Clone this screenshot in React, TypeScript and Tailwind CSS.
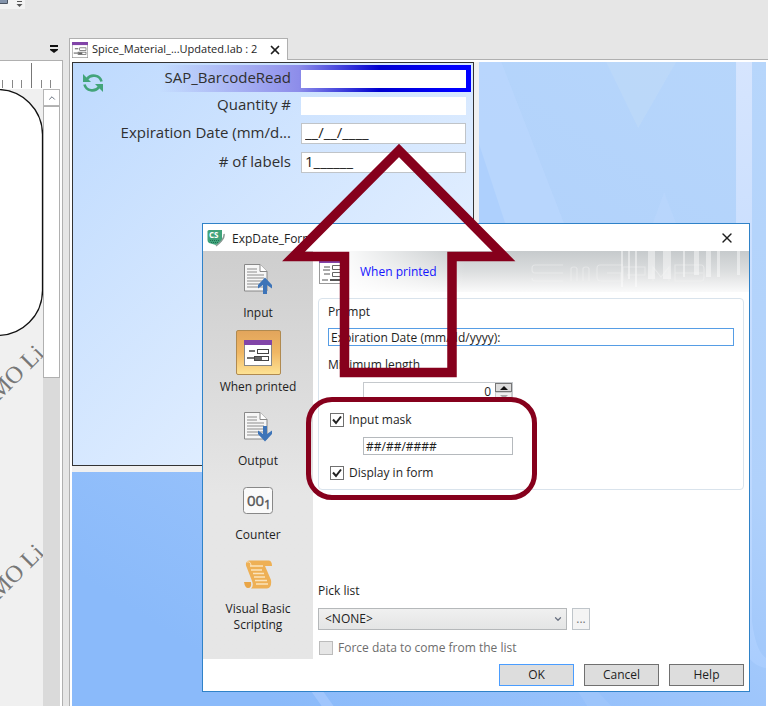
import React from "react";
import { ChevronDown, ChevronUp, X } from "lucide-react";

export default function App() {
  return (
    <div className="relative flex flex-col h-screen overflow-hidden bg-[#e6e6e6] font-['Open_Sans','Liberation_Sans',sans-serif] text-[#1e1e1e]">
      <Toolbar />
      <main className="flex flex-1 min-h-0">
        <LabelPane />
        <FormPane />
      </main>
      <FormatDialog />
      <Annotations />
    </div>
  );
}

const Toolbar = () => (
  <header className="h-[38px] shrink-0">
    <div className="flex items-start h-[9px] w-[25px] bg-[#f3f3f3]">
      <svg className="w-[25px] h-[9px]" viewBox="0 0 25 9" aria-hidden="true">
        <path d="M0 0H7V3H0Z" fill="#8494ab" />
        <path d="M0 3.500H7.500V0" fill="none" stroke="#4b5563" />
        <path d="M17 1.500H22" stroke="#555" />
        <path d="M16.500 4H22.500L19.500 7Z" fill="#555" />
      </svg>
    </div>
  </header>
);

const LabelPane = () => (
  <section className="flex flex-col w-[63px] shrink-0">
    <div className="flex items-center justify-end h-[22px] pr-1">
      <button aria-label="Open documents" className="w-[10px] h-[10px]">
        <svg viewBox="0 0 10 10" aria-hidden="true">
          <path d="M1 2H9" stroke="#111" strokeWidth="2" />
          <path d="M1 5H9V6L5 9L1 6Z" fill="#111" />
        </svg>
      </button>
    </div>
    <div className="flex flex-col flex-1 min-h-0 border-t border-r border-[#b0b0b0] bg-white pr-[2px]">
      <svg className="w-full h-[28px] shrink-0" viewBox="0 0 60 28" preserveAspectRatio="xMinYMin slice" aria-hidden="true">
        <path d="M31.500 2V27" stroke="#777" />
        <path d="M2.500 19V27M12.500 19V27M21.500 19V27M41.500 19V27M50.500 19V27" stroke="#888" />
      </svg>
      <div className="flex flex-1 min-h-0">
        <svg className="flex-1 h-full bg-[#f0f0f0]" viewBox="0 0 43 617" preserveAspectRatio="xMinYMin slice" aria-hidden="true">
          <rect x="-90" y="0.500" width="132.500" height="246" rx="45" fill="#fff" stroke="#111" strokeWidth="1.300" />
          <g fill="#777" fontFamily="'Liberation Serif', serif" fontSize="24">
            <text transform="translate(2 309) rotate(-45)" x="-5">MO Li</text>
            <text transform="translate(2 508) rotate(-45)" x="-5">MO Li</text>
          </g>
        </svg>
        <div className="flex flex-col w-[17px] bg-[#dadada]">
          <button aria-label="Scroll up" className="flex items-center justify-center h-[17px] border border-[#b5b5b5] bg-white">
            <ChevronUp className="w-[10px] h-[10px] text-gray-600" />
          </button>
          <div className="h-[272px] border border-[#b0b0b0] bg-white" />
        </div>
      </div>
    </div>
  </section>
);

const FormPane = () => (
  <section className="flex flex-col flex-1 min-w-0 pl-[6px]">
    <div className="flex shrink-0 h-[22px]">
      <div className="flex items-center gap-1 pl-[2px] pr-[5px] w-[219px] border-t border-x border-[#b0b0b0] bg-white">
        <FormIcon className="w-4 h-4 shrink-0" />
        <span className="text-[11px] whitespace-nowrap">Spice_Material_...Updated.lab : 2</span>
        <button aria-label="Close tab" className="ml-auto">
          <X className="w-[14px] h-[14px]" strokeWidth={3} />
        </button>
      </div>
      <div className="flex-1 border-b border-[#b0b0b0]" />
    </div>
    <div className="flex flex-1 min-h-0 border-l border-[#b0b0b0] bg-white pt-[2px] pl-[2px] pr-[2px]">
      <div className="relative flex-1">
        <Wallpaper />
        <div className="relative w-[407px] max-w-full bg-[#f0f0f0] pr-[5px] pb-[6px]">
          <PrintForm />
        </div>
      </div>
    </div>
  </section>
);

const Wallpaper = () => (
  <svg className="absolute inset-0 w-full h-full" viewBox="0 0 695 644" preserveAspectRatio="none" aria-hidden="true">
    <defs>
      <linearGradient id="sky" x1="1" y1="0" x2="0.300" y2="1">
        <stop offset="0" stopColor="#b7d6fb" />
        <stop offset="0.450" stopColor="#b0d1fb" />
        <stop offset="0.750" stopColor="#98c2fb" />
        <stop offset="1" stopColor="#8abafa" />
      </linearGradient>
      <linearGradient id="strip" x1="0" y1="0" x2="0" y2="1">
        <stop offset="0" stopColor="#d6e5fe" />
        <stop offset="0.800" stopColor="#b9d6fe" />
        <stop offset="1" stopColor="#a9cdfe" />
      </linearGradient>
    </defs>
    <rect width="695" height="644" fill="url(#sky)" />
    <path d="M407 0H430L500 180H407Z" fill="#bad7fd" opacity="0.700" />
    <path d="M407 80L440 180H407Z" fill="#aed0fd" />
    <path d="M535 0H605L567 66Z" fill="#bfdaf9" opacity="0.600" />
    <path d="M593 130L612 180H575Z" fill="#bad7fd" opacity="0.600" />
    <path d="M665 0H681V560Q685 590 695 596V606Q678 604 670 580L665 540Z" fill="url(#strip)" />
    <path d="M507 630H527L540 644H516Z" fill="#a8cbfd" opacity="0.400" />
    <path d="M240 630H252L262 644H250Z" fill="#a8cbfd" opacity="0.700" />
  </svg>
);

const fields = [
  {
    id: "barcode",
    label: "SAP_BarcodeRead",
    value: "",
    row: "h-[27px] bg-[linear-gradient(90deg,transparent_15%,#8d8dea_53%,#0000d0_75%,#0000ff_95%)]",
    box: "h-[18px]",
  },
  { id: "quantity", label: "Quantity #", value: "", row: "h-[27px]", box: "h-[18px]" },
  { id: "expiration", label: "Expiration Date (mm/d...", value: "__/__/____", row: "h-[29px]", box: "h-[21px] border border-[#c0c4c8]" },
  { id: "labels", label: "# of labels", value: "1______", row: "h-[29px]", box: "h-[21px] border border-[#c0c4c8]" },
];

const PrintForm = () => (
  <form className="flex items-start h-[404px] border border-[#333] bg-linear-to-br from-[#bedafe] to-[#eff6ff] pt-[2px] pr-[2px]">
    <button type="button" aria-label="Refresh" className="mt-[7px] ml-[9px] shrink-0">
      <svg className="w-[22px] h-[22px]" viewBox="0 0 22 22" aria-hidden="true">
        <path d="M5 7A8 7.500 0 0 1 19.500 9.500M17 15A8 7.500 0 0 1 2.500 12.500" fill="none" stroke="#43a47a" strokeWidth="2.600" />
        <path d="M1 2V10H9Z" fill="#43a47a" />
        <path d="M21 12V20L13 12Z" fill="#43a47a" />
      </svg>
    </button>
    <div className="flex-1 min-w-0">
      {fields.map((f) => (
        <div key={f.id} className={`flex items-center pr-[5px] ${f.row}`}>
          <label htmlFor={f.id} className="flex-1 pr-[10px] pb-[2px] text-right text-[15px] whitespace-nowrap text-[#303030]">
            {f.label}
          </label>
          <input id={f.id} defaultValue={f.value} className={`w-[165px] px-[3px] pb-[2px] bg-white text-[15px] outline-none ${f.box}`} />
        </div>
      ))}
    </div>
  </form>
);

const FormIcon = ({ className }: { className: string }) => (
  <svg className={className} viewBox="0 0 28 26" preserveAspectRatio="none" aria-hidden="true">
    <rect x="0.500" y="0.500" width="27" height="25" fill="#fff" stroke="#888" />
    <rect width="28" height="5" fill="#8144a8" />
    <path d="M5 11H11M3 18H10" stroke="#444" strokeWidth="1.500" />
    <rect x="13.500" y="9.500" width="11" height="4" fill="#fff" stroke="#444" />
    <rect x="10.500" y="16.500" width="14" height="4" fill="#fff" stroke="#444" />
    <rect x="11" y="17" width="7" height="3" fill="#666" />
  </svg>
);

const BannerIcon = () => (
  <svg className="relative w-[28px] h-[24px] ml-[6px]" viewBox="0 0 28 24" aria-hidden="true">
    <rect x="0.500" y="0.500" width="27" height="23" fill="#fff" stroke="#999" />
    <rect width="28" height="3" fill="#8144a8" />
    <path d="M5 7H11M4 10H11M5 14H11M3 20H9" stroke="#555" />
    <path d="M13.500 5.500H24.500V9.500H13.500ZM13.500 12.500H24.500V16.500H13.500Z" fill="#fff" stroke="#666" />
    <rect x="11" y="19" width="14" height="2" fill="#555" />
  </svg>
);

const DocumentIcon = ({ down }: { down?: boolean }) => (
  <svg className="w-[30px] h-[32px]" viewBox="0 0 30 32" aria-hidden="true">
    <path d="M1.500 1.500H17L24 8.500V28H1.500Z" fill="#f6f6f6" stroke="#888" />
    <path d="M17 1.500V8.500H24" fill="#fff" stroke="#888" />
    <path d="M4 6H14M4 9H14M4 12H21M4 15H21M4 18H21M4 21H21M4 24H21" stroke="#8c8c8c" />
    <path
      d={down ? "M20 15H24V23L29 19.500V23L22 30.500L15 23V19.500L20 23Z" : "M20 31H24V22L29 25.500V22L22 14.500L15 22V25.500L20 22Z"}
      fill="#3d74b8"
    />
  </svg>
);

const CounterIcon = () => (
  <svg className="w-[30px] h-[27px]" viewBox="0 0 30 27" aria-hidden="true">
    <rect x="0.500" y="0.500" width="29" height="26" rx="3" fill="#fafafa" stroke="#888" />
    <g fill="#555" stroke="#555" strokeWidth="0.400" fontFamily="'Open Sans', sans-serif">
      <text x="4" y="19" fontSize="15">00</text>
      <text x="21" y="22" fontSize="12">1</text>
    </g>
  </svg>
);

const ScrollIcon = () => (
  <svg className="w-[29px] h-[29px]" viewBox="0 0 29 29" aria-hidden="true">
    <path d="M5 0.500H25Q28 1 28 6H21L27 20Q28 28 23 28.500H7Q10 26 8 21L3 8Q0 2 5 0.500Z" fill="#eeb055" />
    <path d="M0 22H7Q8 28 4 28Q1 28 0 22Z" fill="#e9a546" />
    <path d="M6 6H19M7 10H18M9 13.500H20M10 17H21M11 20.500H23M12 24H24" stroke="#fbe3bb" strokeWidth="1.500" />
    <path d="M3 2Q7 1 7 6" fill="none" stroke="#fbe3bb" />
  </svg>
);

const sections = [
  { label: "Input", icon: <DocumentIcon /> },
  { label: "When printed", icon: <FormIcon className="w-[28px] h-[26px]" />, active: true },
  { label: "Output", icon: <DocumentIcon down /> },
  { label: "Counter", icon: <CounterIcon /> },
  { label: "Visual Basic Scripting", icon: <ScrollIcon /> },
];

const FormatDialog = () => (
  <div
    role="dialog"
    aria-label="ExpDate_Form"
    className="absolute left-[202px] top-[223px] flex flex-col w-[548px] border border-[#2f82c8] bg-white text-[12px] leading-4"
  >
    <div className="flex items-center h-[27px] pl-[4px] pr-[14px]">
      <svg className="w-[18px] h-[18px]" viewBox="0 0 18 18" aria-hidden="true">
        <path d="M2 1H15V12L9 16L2 14Q0.500 13 0.500 11V2.500Q0.500 1 2 1Z" fill="#3fa27a" />
        <path d="M17 5Q18 10 9 17" fill="none" stroke="#8b9a94" strokeWidth="1.500" />
        <text x="2" y="9" fill="#fff" fontSize="8" fontWeight="700" fontFamily="'Open Sans', sans-serif">CS</text>
        <path d="M3 11.500H13M4 13.500H12" stroke="#1f6f50" strokeDasharray="1 1" />
      </svg>
      <span className="ml-[7px] mt-[2px]">ExpDate_Form</span>
      <button aria-label="Close" className="ml-auto">
        <X className="w-4 h-4" strokeWidth={2} />
      </button>
    </div>
    <div className="flex">
      <nav className="flex flex-col gap-[9px] w-[110px] h-[408px] shrink-0 pt-[5px] bg-linear-to-b from-[#cecece] to-[#e6e6e6] to-60%">
        {sections.map((s) => (
          <button key={s.label} className="flex flex-col items-center gap-1 px-5 leading-4">
            <span
              className={`flex items-center justify-center w-[45px] h-[45px] rounded-xs ${
                s.active ? "border border-[#b08a50] bg-linear-to-b from-[#e2a55c] via-[#f0b764] to-[#fde293]" : ""
              }`}
            >
              {s.icon}
            </span>
            <span className={s.active ? "whitespace-nowrap" : ""}>{s.label}</span>
          </button>
        ))}
      </nav>
      <div className="flex flex-col flex-1 min-w-0">
        <Banner />
        <PromptSettings />
        <PickList />
      </div>
    </div>
    <div className="flex justify-end gap-[10px] px-[5px] pt-[5px] pb-[5px]">
      <DialogButton label="OK" primary />
      <DialogButton label="Cancel" />
      <DialogButton label="Help" />
    </div>
  </div>
);

const Banner = () => (
  <div className="relative flex items-center h-[41px] pt-px">
    <svg className="absolute inset-0 w-full h-full" viewBox="0 0 436 41" preserveAspectRatio="none" aria-hidden="true">
      <defs>
        <linearGradient id="steel" x1="0" y1="0" x2="0" y2="1">
          <stop offset="0" stopColor="#c6cacc" />
          <stop offset="0.500" stopColor="#dcdedf" />
          <stop offset="1" stopColor="#fafafa" />
        </linearGradient>
        <linearGradient id="fade" x1="0" y1="0" x2="1" y2="0">
          <stop offset="0" stopColor="#fff" />
          <stop offset="0.080" stopColor="#fff" stopOpacity="0.900" />
          <stop offset="0.350" stopColor="#fff" stopOpacity="0" />
        </linearGradient>
      </defs>
      <rect width="436" height="41" fill="url(#steel)" />
      <rect width="436" height="41" fill="url(#fade)" />
      <g fill="#fff" opacity="0.450">
        <path d="M308 0H310V36H308ZM315 0H317V28H315ZM322 0H324V36H322ZM335 0H342V28H335ZM350 0H358V28H350ZM370 0H372V26H370ZM381 0H386V24H381ZM393 0H398V26H393ZM404 0H407V26H404ZM424 0H427V24H424Z" />
      </g>
      <g fill="none" stroke="#f4f5f5" strokeWidth="1.200" opacity="0.450">
        <path d="M250 14H222Q219 14 219 18T222 22H250M250 30H222Q219 30 219 27M258 30V18Q258 16 261 16T264 18V30M270 30V18Q270 16 273 16T276 18V30M310 14H287Q284 14 284 18V26Q284 30 288 30H308V22H294M310 30V16H332V24H314M340 30V16L348 26L356 16V30M362 22H390M362 14H388Q391 14 391 18V26Q391 30 388 30H362Z" />
      </g>
    </svg>
    <BannerIcon />
    <span className="relative ml-[13px] text-[#1414ff]">When printed</span>
  </div>
);

const PromptSettings = () => (
  <fieldset className="mx-[5px] mt-[6px] h-[192px] rounded-sm border border-[#d9e3ec] px-[9px] pt-[5px]">
    <label htmlFor="prompt" className="block">Prompt</label>
    <input
      id="prompt"
      defaultValue="Expiration Date (mm/dd/yyyy):"
      className="block w-full h-[18px] mt-2 px-[2px] border border-[#569de5] bg-white outline-none"
    />
    <label htmlFor="min-length" className="block mt-[11px]">Minimum length</label>
    <div className="flex w-[150px] h-5 mt-[9px] ml-[35px] border border-[#c5c9cd]">
      <input id="min-length" defaultValue="0" className="flex-1 min-w-0 pr-1 text-right outline-none" />
      <div className="flex flex-col w-[17px]">
        <button type="button" aria-label="Increase" className="flex flex-1 items-center justify-center border border-[#777] bg-[#ddd]">
          <svg className="w-2 h-1" viewBox="0 0 8 4" aria-hidden="true">
            <path d="M0 4L4 0L8 4Z" fill="#111" />
          </svg>
        </button>
        <button type="button" aria-label="Decrease" className="flex flex-1 items-center justify-center border border-[#ccc] bg-[#f0f0f0]">
          <svg className="w-2 h-1" viewBox="0 0 8 4" aria-hidden="true">
            <path d="M0 0L4 4L8 0Z" fill="#aaa" />
          </svg>
        </button>
      </div>
    </div>
    <Tick id="use-mask" label="Input mask" className="mt-[10px]" />
    <input
      aria-label="Mask"
      defaultValue="##/##/####"
      className="block w-[150px] h-[18px] mt-[9px] ml-[35px] px-[2px] border border-[#b5b9bd] bg-white outline-none"
    />
    <Tick id="display" label="Display in form" className="mt-[10px]" />
  </fieldset>
);

const Tick = ({ id, label, className }: { id: string; label: string; className: string }) => (
  <div className={`flex items-center h-4 gap-[5px] ${className}`}>
    <span className="relative ml-[2px] w-[14px] h-[14px]">
      <input id={id} type="checkbox" defaultChecked className="peer block w-[14px] h-[14px] appearance-none border border-[#707070] bg-white" />
      <svg className="absolute inset-0 hidden peer-checked:block pointer-events-none" viewBox="0 0 14 14" aria-hidden="true">
        <path d="M3 6.500L6 10L11 3.500" fill="none" stroke="#222" strokeWidth="2" />
      </svg>
    </span>
    <label htmlFor={id}>{label}</label>
  </div>
);

const PickList = () => (
  <div className="mt-auto px-[5px] pb-[3px]">
    <label htmlFor="pick-list" className="block">Pick list</label>
    <div className="flex gap-[5px] mt-[9px]">
      <div className="relative w-[249px]">
        <select
          id="pick-list"
          disabled
          className="block w-full h-[22px] appearance-none border border-[#b5b8ba] bg-linear-to-b from-[#f0f0f0] to-[#e4e5e5] px-[6px] text-[#222] opacity-100"
        >
          <option>&lt;NONE&gt;</option>
        </select>
        <ChevronDown className="absolute right-1 top-[6px] w-[10px] h-[10px] text-gray-500 pointer-events-none" strokeWidth={3} />
      </div>
      <button type="button" disabled className="w-[18px] h-[22px] border border-[#bfc5ca] bg-[#f4f4f4] text-[#777]">
        ...
      </button>
    </div>
    <div className="flex items-center h-4 gap-[5px] mt-[10px] text-[#6d6d6d]">
      <input id="force" type="checkbox" disabled className="ml-px w-[14px] h-[14px] appearance-none border border-[#bcbcbc] bg-[#e6e6e6]" />
      <label htmlFor="force">Force data to come from the list</label>
    </div>
  </div>
);

const DialogButton = ({ label, primary }: { label: string; primary?: boolean }) => (
  <button
    type="button"
    className={`w-[75px] h-[22px] border bg-[#dddddd] ${primary ? "border-[#4a9dff]" : "border-[#707070]"}`}
  >
    {label}
  </button>
);

const Annotations = () => (
  <>
    <svg className="absolute left-[282px] top-[144px] w-[234px] h-[234px] pointer-events-none" viewBox="0 0 234 234" aria-hidden="true">
      <path
        d="M117 6.500L11.500 112.500H62.500V228.500H170V112.500H222Z"
        fill="none"
        stroke="#86001c"
        strokeWidth="9.500"
        strokeMiterlimit="10"
      />
    </svg>
    <div className="absolute left-[306px] top-[397px] w-[231px] h-[103px] rounded-[26px] border-[5px] border-[#86001c] pointer-events-none" />
  </>
);
